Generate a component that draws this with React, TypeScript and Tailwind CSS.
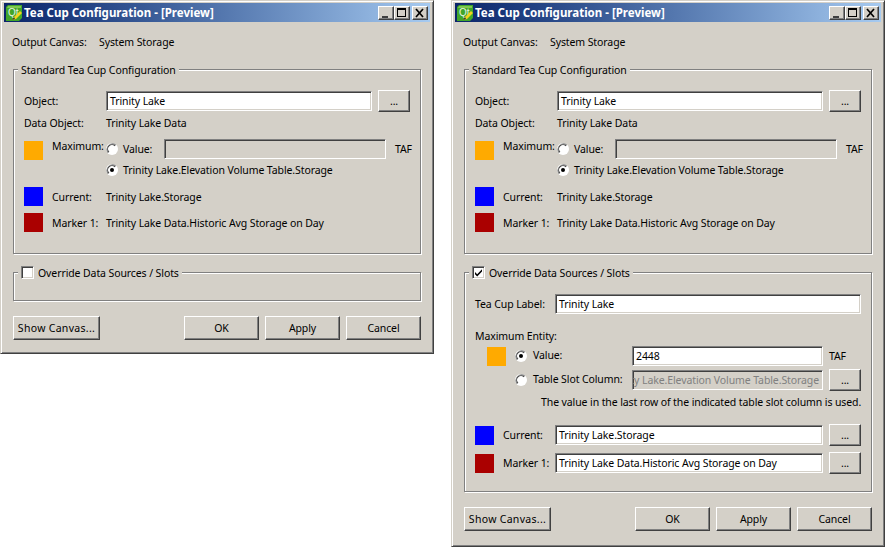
import React from "react";

const sunken =
  "border border-t-[#808080] border-l-[#808080] border-r-white border-b-white shadow-[inset_1px_1px_0_#404040,inset_-1px_-1px_0_#d4d0c8]";
const raised =
  "border border-t-white border-l-white border-r-[#404040] border-b-[#404040] shadow-[inset_-1px_-1px_0_#808080] bg-[#d4d0c8]";

function QtIcon() {
  return (
    <svg width="16" height="16" viewBox="0 0 16 16" className="shrink-0">
      <path d="M2 0H16V13L13 16H0V2Z" fill="#41a62a" />
      <path d="M2 1H15V3H1Z" fill="#7fc84f" />
      <text x="2" y="11" fontSize="10" fontWeight="400" fill="#e8f5e0" fontFamily="Liberation Sans, sans-serif">Qt</text>
      <path d="M6 15L8 12L14 6L16 8L10 14Z" fill="#f2d21e" />
      <path d="M6 15L8 12L9 14Z" fill="#333" />
    </svg>
  );
}

function TitleButton({ kind }: { kind: "min" | "max" | "close" }) {
  return (
    <div className={`w-4 h-[14px] flex items-center justify-center ${raised}`}>
      <svg width="14" height="12" viewBox="0 0 14 12">
        {kind === "min" && <rect x="3" y="9" width="6" height="2" fill="#404040" />}
        {kind === "max" && (
          <path d="M2 1H11V10H2ZM3 3V9H10V3Z" fill="#000" fillRule="evenodd" />
        )}
        {kind === "close" && <path d="M3 2L10 10M10 2L3 10" stroke="#000" strokeWidth="1.7" />}
      </svg>
    </div>
  );
}

function Radio({ checked }: { checked?: boolean }) {
  return (
    <svg width="12" height="12" viewBox="0 0 12 12" className="shrink-0">
      <circle cx="6" cy="6" r="6" fill="#fff" />
      <path d="M10.2 1.8A6 6 0 0 0 1.8 10.2L2.6 9.4A4.8 4.8 0 0 1 9.4 2.6Z" fill="#808080" />
      <path d="M9.4 2.6A4.8 4.8 0 0 0 2.6 9.4L3.3 8.7A3.8 3.8 0 0 1 8.7 3.3Z" fill="#404040" />
      {checked && <circle cx="6" cy="6" r="2" fill="#000" />}
    </svg>
  );
}

function Check({ checked }: { checked?: boolean }) {
  return (
    <div className={`w-[13px] h-[13px] bg-white shrink-0 ${sunken}`}>
      {checked && (
        <svg width="11" height="11" viewBox="0 0 11 11">
          <path d="M2 5L4.2 7.3L9 2.2V4.6L4.2 9.6L2 7.2Z" fill="#000" />
        </svg>
      )}
    </div>
  );
}

function Swatch({ color }: { color: string }) {
  return <div className="w-[19px] h-[19px] shrink-0" style={{ backgroundColor: color }} />;
}

function Field({ value, className, disabled }: { value?: string; className: string; disabled?: boolean }) {
  return (
    <div
      className={`flex items-center pl-[3px] pr-[3px] overflow-hidden whitespace-nowrap ${sunken} ${className} ${
        disabled ? "bg-[#d4d0c8] text-[#808080] justify-end" : "bg-white"
      }`}
    >
      {value}
    </div>
  );
}

function Dots({ className }: { className: string }) {
  return <div className={`w-8 h-[22px] flex items-center justify-center shrink-0 ${raised} ${className}`}>...</div>;
}

function Btn({ label, w, extra }: { label: string; w: string; extra?: string }) {
  return <div className={`h-[24px] flex items-center justify-center ${raised} ${w} ${extra ?? ""}`}>{label}</div>;
}

function StandardGroup() {
  return (
    <div className="relative mx-[12px] mt-[19px] w-[408px] h-[185px] border border-[#808080] shadow-[1px_1px_0_#fff,inset_1px_1px_0_#fff] pl-[10px]">
      <div className="absolute left-[4px] -top-[7px] bg-[#d4d0c8] px-[3px] leading-[15px]">Standard Tea Cup Configuration</div>
      <div className="flex items-center h-[22px] mt-[20px]">
        <div className="w-[82px]">Object:</div>
        <Field value="Trinity Lake" className="w-[266px] h-[20px]" />
        <Dots className="ml-[6px]" />
      </div>
      <div className="flex items-center h-[16px] mt-[3px]">
        <div className="w-[82px]">Data Object:</div>
        <div>Trinity Lake Data</div>
      </div>
      <div className="flex mt-[8px] h-[40px]">
        <div className="mt-[2px]"><Swatch color="#ffaa00" /></div>
        <div className="w-[54px] ml-[9px] leading-[14px]">Maximum:</div>
        <div className="flex flex-col">
          <div className="flex items-center h-[20px]">
            <Radio />
            <div className="ml-[5px] w-[41px]">Value:</div>
            <Field className="w-[222px] h-[20px]" disabled />
            <div className="ml-[9px]">TAF</div>
          </div>
          <div className="flex items-center h-[16px] mt-[3px]">
            <Radio checked />
            <div className="ml-[5px]">Trinity Lake.Elevation Volume Table.Storage</div>
          </div>
        </div>
      </div>
      <div className="flex items-center h-[19px] mt-[8px]">
        <Swatch color="#0000ff" />
        <div className="w-[54px] ml-[9px]">Current:</div>
        <div>Trinity Lake.Storage</div>
      </div>
      <div className="flex items-center h-[19px] mt-[7px]">
        <Swatch color="#aa0000" />
        <div className="w-[54px] ml-[9px]">Marker 1:</div>
        <div>Trinity Lake Data.Historic Avg Storage on Day</div>
      </div>
    </div>
  );
}

function GroupLegend({ checked }: { checked?: boolean }) {
  return (
    <div className="absolute left-[4px] -top-[7px] bg-[#d4d0c8] pl-[3px] pr-[3px] flex items-start gap-[4px] leading-[15px]">
      <Check checked={checked} />
      <span>Override Data Sources / Slots</span>
    </div>
  );
}

function Buttons() {
  return (
    <div className="flex mx-[12px] w-[408px]">
      <Btn label="Show Canvas..." w="w-[87px]" extra="tracking-[0.3px]" />
      <div className="flex-1" />
      <div className="flex gap-[6px]">
        <Btn label="OK" w="w-[75px]" />
        <Btn label="Apply" w="w-[75px]" />
        <Btn label="Cancel" w="w-[75px]" />
      </div>
    </div>
  );
}

function Window({ height, children }: { height: string; children: React.ReactNode }) {
  return (
    <div className={`w-[434px] shrink-0 bg-[#d4d0c8] border border-l-[#d4d0c8] border-t-[#d4d0c8] border-r-[#404040] border-b-[#404040] shadow-[inset_1px_1px_0_#fff,inset_-1px_-1px_0_#808080] ${height}`}>
      <div className="mx-[3px] mt-[2px] h-[19px] flex items-center pl-[2px] pr-[2px] bg-gradient-to-r from-[#0a246a] to-[#a6caf0]">
        <QtIcon />
        <div className="ml-[2px] text-white font-bold text-[11.5px] tracking-normal">Tea Cup Configuration - [Preview]</div>
        <div className="flex-1" />
        <TitleButton kind="min" />
        <TitleButton kind="max" />
        <div className="ml-[2px]"><TitleButton kind="close" /></div>
      </div>
      <div className="flex mx-[11px] mt-[12px] h-[16px] items-center">
        <div className="w-[87px]">Output Canvas:</div>
        <div>System Storage</div>
      </div>
      {children}
    </div>
  );
}

export default function App() {
  return (
    <div className="flex w-[885px] h-[547px] gap-[17px] items-start bg-white overflow-hidden text-[10.5px] tracking-[-0.1px] leading-[16px] text-black font-['Noto_Sans',sans-serif]">
      <Window height="h-[354px]">
        <StandardGroup />
        <div className="relative mx-[12px] mt-[18px] w-[408px] h-[29px] border border-[#808080] shadow-[1px_1px_0_#fff,inset_1px_1px_0_#fff]">
          <GroupLegend />
        </div>
        <div className="mt-[15px]"><Buttons /></div>
      </Window>
      <Window height="h-[547px]">
        <StandardGroup />
        <div className="relative mx-[12px] mt-[18px] w-[408px] h-[220px] border border-[#808080] shadow-[1px_1px_0_#fff,inset_1px_1px_0_#fff] pl-[10px]">
          <GroupLegend checked />
          <div className="flex items-center h-[20px] mt-[21px]">
            <div className="w-[80px]">Tea Cup Label:</div>
            <Field value="Trinity Lake" className="w-[306px] h-[20px]" />
          </div>
          <div className="h-[16px] mt-[14px] leading-[16px]">Maximum Entity:</div>
          <div className="flex items-center h-[20px] mt-[2px] ml-[12px]">
            <Swatch color="#ffaa00" />
            <div className="ml-[9px]"><Radio checked /></div>
            <div className="ml-[6px] w-[99px] shrink-0 pb-[2px]">Value:</div>
            <Field value="2448" className="w-[191px] h-[20px]" />
            <div className="ml-[6px]">TAF</div>
          </div>
          <div className="flex items-center h-[22px] mt-[3px] ml-[40px]">
            <Radio />
            <div className="ml-[6px] w-[99px] shrink-0 pb-[2px]">Table Slot Column:</div>
            <Field value="Trinity Lake.Elevation Volume Table.Storage" className="w-[191px] h-[20px]" disabled />
            <Dots className="ml-[6px]" />
          </div>
          <div className="h-[16px] mt-[3px] ml-[66px] whitespace-nowrap">The value in the last row of the indicated table slot column is used.</div>
          <div className="flex items-center h-[22px] mt-[14px]">
            <Swatch color="#0000ff" />
            <div className="w-[52px] ml-[9px]">Current:</div>
            <Field value="Trinity Lake.Storage" className="w-[268px] h-[20px]" />
            <Dots className="ml-[6px]" />
          </div>
          <div className="flex items-center h-[22px] mt-[6px]">
            <Swatch color="#aa0000" />
            <div className="w-[52px] ml-[9px]">Marker 1:</div>
            <Field value="Trinity Lake Data.Historic Avg Storage on Day" className="w-[268px] h-[20px]" />
            <Dots className="ml-[6px]" />
          </div>
        </div>
        <div className="mt-[15px]"><Buttons /></div>
      </Window>
    </div>
  );
}
